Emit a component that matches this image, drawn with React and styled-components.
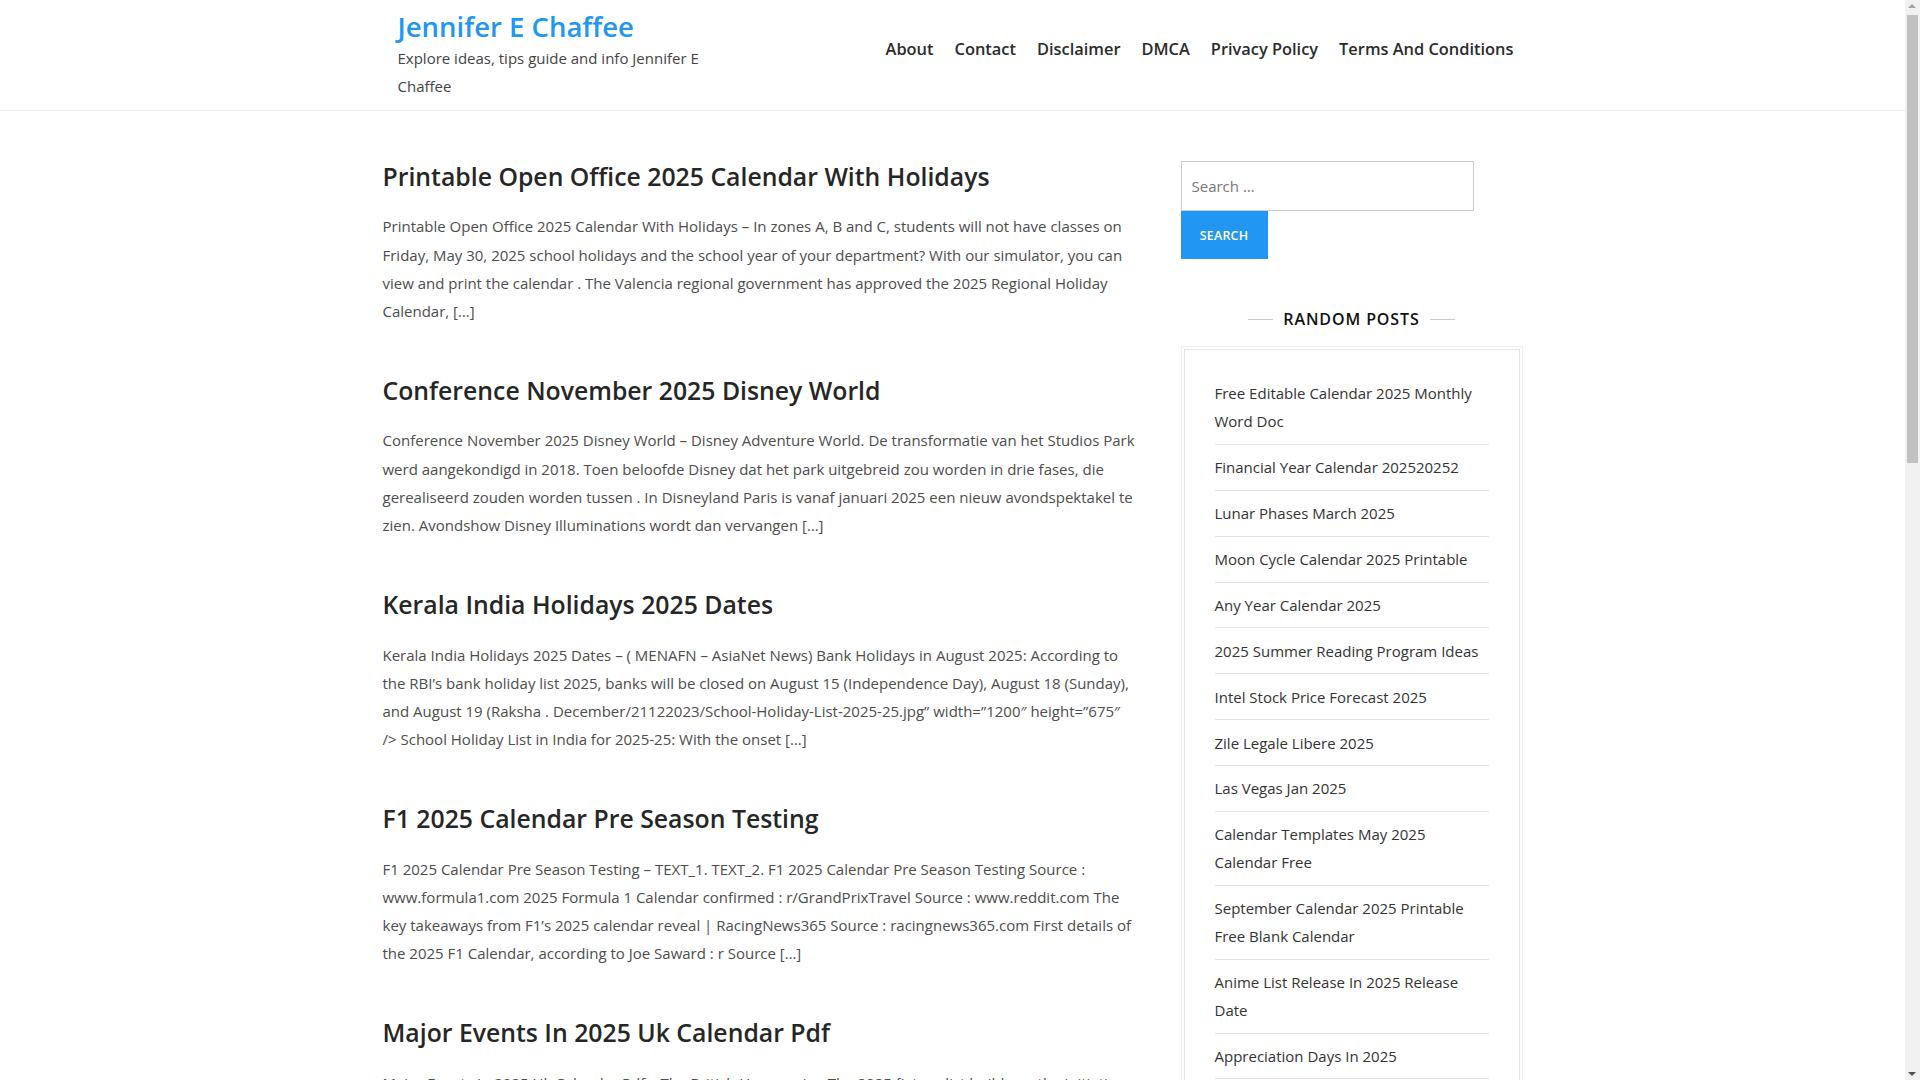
import React from "react";
import styled, { createGlobalStyle } from "styled-components";

const GlobalStyle = createGlobalStyle`
  html { scrollbar-width: none; }
  html::-webkit-scrollbar { display: none; }
  html, body { margin: 0; padding: 0; background: #fff; }
  body {
    font-family: "Open Sans", "Noto Sans", sans-serif;
    color: #505050;
  }
  * { box-sizing: border-box; }
`;

const Page = styled.div`
  padding-right: 15px;
`;

const Scrollbar = styled.div`
  position: fixed;
  top: 0;
  right: 0;
  width: 15px;
  height: 100vh;
  background: #f1f1f1;
  z-index: 10;
`;

const ScrollThumb = styled.div`
  position: absolute;
  top: 15px;
  left: 2px;
  width: 11px;
  height: 448px;
  background: #c1c1c1;
`;

const ScrollArrow = styled.div`
  position: absolute;
  left: 3px;
  width: 0;
  height: 0;
  border-left: 4.5px solid transparent;
  border-right: 4.5px solid transparent;
  ${(p) =>
    p.$down
      ? "bottom: 4px; border-top: 4px solid #505050;"
      : "top: 4px; border-bottom: 4px solid #a3a3a3;"}
`;

const SiteHeader = styled.header`
  border-bottom: 1px solid #ececec;
`;

const HeaderInner = styled.div`
  max-width: 1140px;
  margin: 0 auto;
  display: flex;
  justify-content: space-between;
  align-items: flex-start;
  padding: 9px 9px 10px 15px;
`;

const Branding = styled.div`
  width: 320px;
`;

const SiteTitle = styled.a`
  display: block;
  font-size: 27.5px;
  line-height: 35px;
  font-weight: 600;
  color: #2196f3;
  text-decoration: none;
`;

const Tagline = styled.p`
  margin: 0;
  font-size: 15px;
  line-height: 28px;
  color: #444;
`;

const NavList = styled.ul`
  list-style: none;
  margin: 26px 0 0;
  padding: 0;
  display: flex;
  gap: 21px;
`;

const NavLink = styled.a`
  font-size: 16.4px;
  line-height: 28px;
  font-weight: 600;
  color: #2b2b2b;
  text-decoration: none;
`;

const Layout = styled.div`
  max-width: 1140px;
  margin: 0 auto;
  padding-top: 47px;
  display: flex;
  gap: 43px;
  align-items: flex-start;
`;

const Content = styled.main`
  width: 755px;
  flex: none;
`;

const Article = styled.article`
  margin-bottom: 47.3px;
`;

const PostTitle = styled.h2`
  margin: 0 0 18px;
  font-size: 24.8px;
  line-height: 36.4px;
  font-weight: 600;
  color: #262626;
`;

const Excerpt = styled.p`
  margin: 0;
  font-size: 15px;
  line-height: 28.1px;
  color: #4d4d4d;
`;

const Pagination = styled.nav`
  display: flex;
  gap: 8px;
  padding: 10px 0 60px;
`;

const PageLink = styled.a`
  display: flex;
  align-items: center;
  justify-content: center;
  min-width: 40px;
  height: 40px;
  padding: 0 12px;
  font-size: 15px;
  color: ${(p) => (p.$active ? "#fff" : "#333")};
  background: ${(p) => (p.$active ? "#2196f3" : "#fff")};
  border: 1px solid ${(p) => (p.$active ? "#2196f3" : "#ddd")};
  text-decoration: none;
`;

const Sidebar = styled.aside`
  width: 342px;
  flex: none;
  padding-top: 3px;
`;

const SearchForm = styled.form`
  display: flex;
  flex-direction: column;
  align-items: flex-start;
`;

const SearchInput = styled.input`
  width: 293px;
  height: 50px;
  border: 1px solid #ccc;
  padding: 0 10px;
  font-family: "Open Sans", sans-serif;
  font-size: 15px;
  color: #333;
  outline: none;
  &::placeholder { color: #777; }
`;

const SearchButton = styled.button`
  width: 87px;
  height: 48px;
  border: 0;
  background: #2196f3;
  color: #fff;
  font-family: "Open Sans", sans-serif;
  font-size: 12.5px;
  font-weight: 600;
  letter-spacing: 0.2px;
  cursor: pointer;
`;

const WidgetTitle = styled.h3`
  margin: 47px 0 14px;
  display: flex;
  align-items: center;
  justify-content: center;
  gap: 10px;
  font-size: 16px;
  line-height: 26px;
  font-weight: 600;
  letter-spacing: 0.9px;
  color: #111;
  &::before, &::after {
    content: "";
    width: 25px;
    height: 1px;
    background: #ccc;
  }
`;

const WidgetBox = styled.div`
  border: 1px solid #efefef;
  padding: 2px;
`;

const WidgetInner = styled.div`
  border: 1px solid #e6e6e6;
  padding: 21px 30px 24px;
`;

const PostList = styled.ul`
  list-style: none;
  margin: 0;
  padding: 0;
`;

const PostItem = styled.li`
  padding: 8.45px 0;
  border-bottom: 1px solid #e3e3e3;
`;

const PostLink = styled.a`
  font-size: 15px;
  line-height: 28px;
  color: #333;
  text-decoration: none;
`;

const Footer = styled.footer`
  margin-top: 20px;
  border-top: 1px solid #ececec;
  padding: 36px 0;
  text-align: center;
  font-size: 14px;
  color: #666;
`;

const navItems = ["About", "Contact", "Disclaimer", "DMCA", "Privacy Policy", "Terms And Conditions"];

const posts = [
  {
    title: "Printable Open Office 2025 Calendar With Holidays",
    text: "Printable Open Office 2025 Calendar With Holidays – In zones A, B and C, students will not have classes on Friday, May 30, 2025 school holidays and the school year of your department? With our simulator, you can view and print the calendar . The Valencia regional government has approved the 2025 Regional Holiday Calendar, […]",
  },
  {
    title: "Conference November 2025 Disney World",
    text: "Conference November 2025 Disney World – Disney Adventure World. De transformatie van het Studios Park werd aangekondigd in 2018. Toen beloofde Disney dat het park uitgebreid zou worden in drie fases, die gerealiseerd zouden worden tussen . In Disneyland Paris is vanaf januari 2025 een nieuw avondspektakel te zien. Avondshow Disney Illuminations wordt dan vervangen […]",
  },
  {
    title: "Kerala India Holidays 2025 Dates",
    text: "Kerala India Holidays 2025 Dates – ( MENAFN – AsiaNet News) Bank Holidays in August 2025: According to the RBI’s bank holiday list 2025, banks will be closed on August 15 (Independence Day), August 18 (Sunday), and August 19 (Raksha . December/21122023/School-Holiday-List-2025-25.jpg” width=”1200″ height=”675″ /> School Holiday List in India for 2025-25: With the onset […]",
  },
  {
    title: "F1 2025 Calendar Pre Season Testing",
    text: "F1 2025 Calendar Pre Season Testing – TEXT_1. TEXT_2. F1 2025 Calendar Pre Season Testing Source : www.formula1.com 2025 Formula 1 Calendar confirmed : r/GrandPrixTravel Source : www.reddit.com The key takeaways from F1’s 2025 calendar reveal | RacingNews365 Source : racingnews365.com First details of the 2025 F1 Calendar, according to Joe Saward : r Source […]",
  },
  {
    title: "Major Events In 2025 Uk Calendar Pdf",
    text: "Major Events In 2025 Uk Calendar Pdf – The British Horseracing The 2025 fixture list builds on the initiatives introduced last year, with a number of major events moved to new dates across the season. The calendar of national holidays, sporting fixtures and festivals is available to download as a printable PDF file for the whole year […]",
  },
  {
    title: "Ramadan Calendar 2025 Usa Printable",
    text: "Ramadan Calendar 2025 Usa Printable – The holy month is expected to begin on the evening of February 28, 2025, depending on the sighting of the crescent moon. Sehri and iftar timings vary from city to city, so a printable timetable helps families plan fasting days, prayers and community gatherings throughout the month, from the first fast to Eid al-Fitr […]",
  },
  {
    title: "Academic Calendar 2025 To 2026 Template",
    text: "Academic Calendar 2025 To 2026 Template – Schools and universities publish their term dates well in advance so that students, parents and staff can plan ahead. This editable template covers August 2025 through July 2026, with space for semester start dates, exam weeks, breaks and public holidays, and it can be printed on letter or A4 paper for everyday use […]",
  },
  {
    title: "Free Printable 2025 Weekly Planner",
    text: "Free Printable 2025 Weekly Planner – Stay organised all year with a clean weekly layout that shows seven days on a single page. Each planner sheet includes room for appointments, a short to-do list and notes, and the pages start on Monday or Sunday. Download the PDF, print only the weeks you need, and keep them in a binder or clipboard on your desk […]",
  },
  {
    title: "Chinese New Year 2025 Calendar Dates",
    text: "Chinese New Year 2025 Calendar Dates – The Year of the Snake begins on Wednesday, January 29, 2025, and celebrations continue for fifteen days until the Lantern Festival on February 12. Many countries in Asia observe public holidays during this period, and businesses often close for several days as families travel home to share reunion dinners […]",
  },
  {
    title: "Lunar Calendar 2025 Full Moon Dates",
    text: "Lunar Calendar 2025 Full Moon Dates – There are twelve full moons in 2025, beginning with the Wolf Moon on January 13 and ending with the Cold Moon on December 4. This lunar calendar lists every new moon, first quarter, full moon and last quarter phase, together with the exact times, so you can plan gardening, photography or stargazing evenings […]",
  },
];

const randomPosts = [
  "Free Editable Calendar 2025 Monthly Word Doc",
  "Financial Year Calendar 202520252",
  "Lunar Phases March 2025",
  "Moon Cycle Calendar 2025 Printable",
  "Any Year Calendar 2025",
  "2025 Summer Reading Program Ideas",
  "Intel Stock Price Forecast 2025",
  "Zile Legale Libere 2025",
  "Las Vegas Jan 2025",
  "Calendar Templates May 2025 Calendar Free",
  "September Calendar 2025 Printable Free Blank Calendar",
  "Anime List Release In 2025 Release Date",
  "Appreciation Days In 2025",
  "Printable 2025 Calendar With Week Numbers",
  "Nba Playoffs 2025 Schedule Dates",
];

export default function App() {
  return (
    <Page>
      <GlobalStyle />
      <SiteHeader>
        <HeaderInner>
          <Branding>
            <SiteTitle href="#">Jennifer E Chaffee</SiteTitle>
            <Tagline>Explore ideas, tips guide and info Jennifer E Chaffee</Tagline>
          </Branding>
          <nav>
            <NavList>
              {navItems.map((n) => (
                <li key={n}>
                  <NavLink href="#">{n}</NavLink>
                </li>
              ))}
            </NavList>
          </nav>
        </HeaderInner>
      </SiteHeader>
      <Layout>
        <Content>
          {posts.map((p) => (
            <Article key={p.title}>
              <PostTitle>{p.title}</PostTitle>
              <Excerpt>{p.text}</Excerpt>
            </Article>
          ))}
          <Pagination>
            <PageLink $active href="#">1</PageLink>
            <PageLink href="#">2</PageLink>
            <PageLink href="#">3</PageLink>
            <PageLink href="#">Next »</PageLink>
          </Pagination>
        </Content>
        <Sidebar>
          <SearchForm onSubmit={(e) => e.preventDefault()}>
            <SearchInput type="search" placeholder="Search …" />
            <SearchButton type="submit">SEARCH</SearchButton>
          </SearchForm>
          <WidgetTitle>RANDOM POSTS</WidgetTitle>
          <WidgetBox>
            <WidgetInner>
              <PostList>
                {randomPosts.map((t) => (
                  <PostItem key={t}>
                    <PostLink href="#">{t}</PostLink>
                  </PostItem>
                ))}
              </PostList>
            </WidgetInner>
          </WidgetBox>
        </Sidebar>
      </Layout>
      <Footer>Copyright © 2025 Jennifer E Chaffee. All rights reserved.</Footer>
      <Scrollbar aria-hidden="true">
        <ScrollArrow />
        <ScrollThumb />
        <ScrollArrow $down />
      </Scrollbar>
    </Page>
  );
}
